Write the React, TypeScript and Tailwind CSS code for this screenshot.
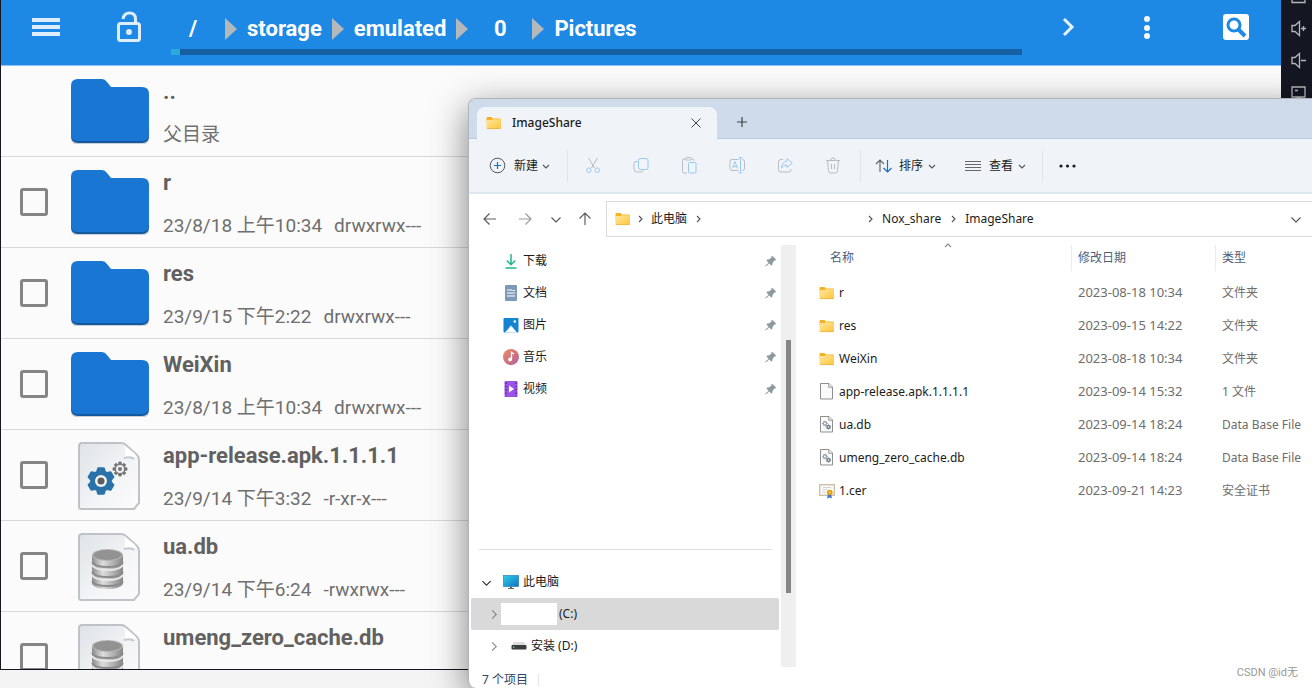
import type { ReactNode } from 'react';

type AndroidKind = 'folder' | 'apk' | 'db';

interface AndroidFile {
  name: string;
  date?: string;
  mode?: string;
  kind: AndroidKind;
  selectable: boolean;
}

const ANDROID_FILES: AndroidFile[] = [
  { name: '..', mode: '父目录', kind: 'folder', selectable: false },
  { name: 'r', date: '23/8/18 上午10:34', mode: 'drwxrwx---', kind: 'folder', selectable: true },
  { name: 'res', date: '23/9/15 下午2:22', mode: 'drwxrwx---', kind: 'folder', selectable: true },
  { name: 'WeiXin', date: '23/8/18 上午10:34', mode: 'drwxrwx---', kind: 'folder', selectable: true },
  { name: 'app-release.apk.1.1.1.1', date: '23/9/14 下午3:32', mode: '-r-xr-x---', kind: 'apk', selectable: true },
  { name: 'ua.db', date: '23/9/14 下午6:24', mode: '-rwxrwx---', kind: 'db', selectable: true },
  { name: 'umeng_zero_cache.db', kind: 'db', selectable: true },
];

const CRUMBS = ['/', 'storage', 'emulated', '0', 'Pictures'];

type WinKind = 'folder' | 'file' | 'db' | 'cert';

const WIN_FILES: { name: string; date: string; type: string; kind: WinKind }[] = [
  { name: 'r', date: '2023-08-18 10:34', type: '文件夹', kind: 'folder' },
  { name: 'res', date: '2023-09-15 14:22', type: '文件夹', kind: 'folder' },
  { name: 'WeiXin', date: '2023-08-18 10:34', type: '文件夹', kind: 'folder' },
  { name: 'app-release.apk.1.1.1.1', date: '2023-09-14 15:32', type: '1 文件', kind: 'file' },
  { name: 'ua.db', date: '2023-09-14 18:24', type: 'Data Base File', kind: 'db' },
  { name: 'umeng_zero_cache.db', date: '2023-09-14 18:24', type: 'Data Base File', kind: 'db' },
  { name: '1.cer', date: '2023-09-21 14:23', type: '安全证书', kind: 'cert' },
];

function gearPath(cx: number, cy: number, outer: number, inner: number, teeth: number) {
  const points: string[] = [];
  for (let i = 0; i < teeth; i++) {
    const base = (i / teeth) * Math.PI * 2 - Math.PI / 2;
    const step = Math.PI / teeth;
    const spots: [number, number][] = [
      [inner, -0.75],
      [outer, -0.42],
      [outer, 0.42],
      [inner, 0.75],
    ];
    spots.forEach(([r, k]) => {
      const a = base + step * k;
      points.push(`${(cx + r * Math.cos(a)).toFixed(2)} ${(cy + r * Math.sin(a)).toFixed(2)}`);
    });
  }
  return `M${points.join('L')}Z`;
}

/* ---------- Android icons ---------- */

function BigFolder() {
  return (
    <svg width="80" height="68" viewBox="-1 0 80 68" aria-hidden="true">
      <path d="M1 10v50q0 6 6 6h66q6 0 6-6V16z" fill="#9aa3ad" opacity=".5" />
      <path d="M1 9v49q0 7 7 7h64q7 0 7-7V18z" fill="#14589f" />
      <path d="M8 1h24q3 0 5 3l4 5h31q7 0 7 7v40q0 7-7 7H8q-7 0-7-7V8q0-7 7-7z" fill="#1976d2" />
    </svg>
  );
}

function BigPage({ children }: { children: ReactNode }) {
  return (
    <svg width="62" height="68" viewBox="0 0 62 68" aria-hidden="true">
      <defs>
        <linearGradient id="page" x1="0" y1="0" x2="1" y2="1">
          <stop offset="0" stopColor="#dfe3e7" />
          <stop offset=".6" stopColor="#f4f5f7" />
          <stop offset="1" stopColor="#fbfbfc" />
        </linearGradient>
        <linearGradient id="drum" x1="0" y1="0" x2="1" y2="0">
          <stop offset="0" stopColor="#8c8c8c" />
          <stop offset=".35" stopColor="#dedede" />
          <stop offset="1" stopColor="#868686" />
        </linearGradient>
      </defs>
      <path d="M4 1h39q3 0 5 2l11 10q2 2 2 5v43l-5 6H3q-2 0-2-2V4q0-3 3-3z" fill="url(#page)" stroke="#bfc3c7" strokeWidth="2" />
      <path d="M46 3q2 5 1 13 6-2 12-1-1-2-3-4z" fill="#fff" />
      <path d="M46 16q7-2 10 1" fill="none" stroke="#c6c9cd" strokeWidth="2" />
      {children}
    </svg>
  );
}

function ApkPage() {
  return (
    <BigPage>
      <path d={gearPath(23, 39, 13, 10, 6)} fill="#2a72a8" stroke="#2a72a8" strokeWidth="2" strokeLinejoin="round" />
      <circle cx="23" cy="39" r="6" fill="#f1f3f5" />
      <circle cx="23" cy="39" r="3.500" fill="#5c5c5c" />
      <path d={gearPath(42, 27, 7, 5, 8)} fill="#777" stroke="#777" strokeWidth="1" strokeLinejoin="round" />
      <circle cx="42" cy="27" r="4" fill="#eceef0" />
      <circle cx="42" cy="27" r="2" fill="#777" />
    </BigPage>
  );
}

function DbPage() {
  return (
    <BigPage>
      <path d="M14 22v29q3 5 15.500 5T45 51V22z" fill="url(#drum)" />
      <path d="M14 29q3 5 15.500 5T45 29M14 39q3 5 15.500 5T45 39M14 48q3 5 15.500 5T45 48" fill="none" stroke="#8b8b8b" strokeWidth="2" />
      <path d="M14 32q3 5 15.500 5T45 32M14 42q3 5 15.500 5T45 42" fill="none" stroke="#e8e8e8" strokeWidth="2" />
      <ellipse cx="29.500" cy="22" rx="15.500" ry="6" fill="#b4b4b4" />
      <ellipse cx="29.500" cy="22" rx="14" ry="5" fill="#929292" />
    </BigPage>
  );
}

const BIG_ICONS: Record<AndroidKind, ReactNode> = {
  folder: <BigFolder />,
  apk: <ApkPage />,
  db: <DbPage />,
};

/* ---------- Windows icons ---------- */

function SmallFolder() {
  return (
    <svg width="16" height="16" viewBox="0 0 16 16" aria-hidden="true">
      <defs>
        <linearGradient id="fold" x1="0" y1="0" x2="1" y2="1">
          <stop offset="0" stopColor="#ffe7a1" />
          <stop offset="1" stopColor="#fcc63a" />
        </linearGradient>
      </defs>
      <path d="M.5 3q0-1 1-1h4l1.500 1.500H14q1 0 1 1V8H.5z" fill="#f4b223" />
      <path d="M.5 5h5l1.200-.8H15V13q0 .8-.8.8H1.300q-.8 0-.8-.8z" fill="url(#fold)" />
      <path d="M1 13.600h13.700" stroke="#e6a92b" strokeWidth=".7" />
    </svg>
  );
}

function SmallFile({ gears = false }: { gears?: boolean }) {
  return (
    <svg width="16" height="17" viewBox="0 0 16 17" aria-hidden="true">
      <path d="M1.500.5h8.500l3.500 3.500v12h-12z" fill="#fafafa" stroke="#8f8f8f" />
      <path d="M9.800.7v3.500h3.500" fill="#fff" stroke="#8f8f8f" />
      {gears && (
        <>
          <path d={gearPath(6, 7.500, 2.800, 2, 8)} fill="#8c9aa8" />
          <circle cx="6" cy="7.500" r="1.100" fill="#fff" />
          <path d={gearPath(9.500, 11, 2.600, 1.800, 8)} fill="#5e6a76" />
          <circle cx="9.500" cy="11" r=".9" fill="#dfe3e7" />
        </>
      )}
    </svg>
  );
}

function Certificate() {
  return (
    <svg width="16" height="16" viewBox="0 0 16 16" aria-hidden="true">
      <rect x=".7" y="1.700" width="14.600" height="10.600" fill="#fdfcf8" stroke="#cdbfa9" strokeWidth="1.400" />
      <path d="M4 4.500h8M3.500 6.500h5M3 9h4" stroke="#c3c7d0" strokeWidth=".8" />
      <path d="M9 11l-1 4.500 2-1 .8 1L11 11zM12 11l1 4.500-1.600-1-.8 1L11 11z" fill="#2f6fd6" />
      <circle cx="10.800" cy="9.500" r="2.800" fill="#d99c12" />
      <circle cx="10.800" cy="9.500" r="1.200" fill="#f3cb4d" />
    </svg>
  );
}

const SMALL_ICONS: Record<WinKind, ReactNode> = {
  folder: <SmallFolder />,
  file: <SmallFile />,
  db: <SmallFile gears />,
  cert: <Certificate />,
};

function Chevron({ dir, size = 8, color = '#555' }: { dir: 'up' | 'down' | 'right'; size?: number; color?: string }) {
  const d = { up: 'M1 6l3-3 3 3', down: 'M1 3l3 3 3-3', right: 'M3 1l3 3-3 3' }[dir];
  return (
    <svg width={size} height={size} viewBox="0 0 8 8" fill="none" stroke={color} strokeWidth={9 / size} aria-hidden="true" className="shrink-0">
      <path d={d} />
    </svg>
  );
}

function Arrow({ dir, color = '#5c5c5c' }: { dir: 'left' | 'right' | 'up'; color?: string }) {
  const d = {
    left: 'M14 8H2M7.500 2.500L2 8l5.500 5.500',
    right: 'M2 8h12M8.500 2.500L14 8l-5.500 5.500',
    up: 'M8 14V2M2.500 7.500L8 2l5.500 5.500',
  }[dir];
  return (
    <svg width="16" height="16" viewBox="0 0 16 16" fill="none" stroke={color} strokeWidth="1.200" aria-hidden="true">
      <path d={d} />
    </svg>
  );
}

function Pin() {
  return (
    <svg width="12" height="12" viewBox="0 0 12 12" fill="#8d99a1" aria-hidden="true">
      <path d="M7.200.8l4 4-1.200.8-.8.2L7.600 7.800l-.3 2.300-.9.5L4.200 8.400 1.200 11.300l-.7.1.1-.8 3-2.900L1.500 5.500l.6-.9 2.400-.3 1.900-1.800.1-.9z" />
    </svg>
  );
}

const gray = '#b9bdc1';
const blue = '#98c9ee';

const TOOLS: { label: string; icon: ReactNode }[] = [
  {
    label: '剪切',
    icon: (
      <>
        <path d="M3.500 1l6 10M12.500 1l-6 10" stroke={gray} />
        <circle cx="3.800" cy="13.200" r="2.300" stroke={blue} />
        <circle cx="12.200" cy="13.200" r="2.300" stroke={blue} />
      </>
    ),
  },
  {
    label: '复制',
    icon: (
      <>
        <path d="M4.500 4.500H3q-2 0-2 2V12q0 3 3 3h4q1.500 0 2-1.500" stroke={gray} />
        <rect x="5.500" y="1.500" width="9.500" height="11" rx="2" stroke={blue} />
      </>
    ),
  },
  {
    label: '粘贴',
    icon: (
      <>
        <path d="M5 2H3q-1.500 0-1.500 1.500v11Q1.500 16 3 16h3M11 2h.5Q13 2 13 3.500V4" stroke={gray} />
        <rect x="4.500" y=".5" width="6" height="2.500" rx="1" stroke={gray} />
        <rect x="7.500" y="5.500" width="7.500" height="10.500" rx="1" stroke={blue} />
      </>
    ),
  },
  {
    label: '重命名',
    icon: (
      <>
        <path d="M9.500 2.500H3q-2 0-2 2v7q0 2 2 2h6.500M13.500 2.500q2 0 2 2v7q0 2-2 2" stroke={gray} />
        <path d="M3.500 11.500L6 4.500l2.500 7M4.300 9.500h3.400M11.500 1v14.500M9.500.7h4M9.500 15.800h4" stroke={blue} />
      </>
    ),
  },
  {
    label: '共享',
    icon: (
      <>
        <path d="M6 2.500H4q-2.500 0-2.500 2.500v7.500Q1.500 15 4 15h7.500q2.500 0 2.500-2.500V12" stroke={gray} />
        <path d="M10 1.500L15.300 6 10 10.500V8Q6.500 8 4.500 11q.3-6 5.500-7z" stroke={blue} />
      </>
    ),
  },
  {
    label: '删除',
    icon: (
      <path d="M1 3.500h14M5.500 3.500q0-2.500 2.500-2.500t2.500 2.500M2.500 3.500L3.500 14q.2 2 2 2h5q1.800 0 2-2l1-10.500M6.500 7v5M9.500 7v5" stroke={gray} />
    ),
  },
];

const PLACES: { label: string; icon: ReactNode }[] = [
  {
    label: '下载',
    icon: <path d="M8 1v10.500M3.800 7.500L8 11.700l4.200-4.200M2.500 15h11" fill="none" stroke="#1fb58a" strokeWidth="1.500" />,
  },
  {
    label: '文档',
    icon: (
      <>
        <rect x="2" y="0" width="12" height="16" rx="1" fill="#7f9ab8" />
        <path d="M4 5h5M4 8h8M4 11h8M9.500 5.500h2.500" stroke="#fff" strokeWidth="1.200" />
      </>
    ),
  },
  {
    label: '图片',
    icon: (
      <>
        <rect x=".5" y="1" width="15" height="14.500" rx="1" fill="#1383d2" />
        <path d="M2 15.500l6-7 6 7z" fill="#fff" />
        <circle cx="11.800" cy="4.500" r="1.300" fill="#fff" />
      </>
    ),
  },
  {
    label: '音乐',
    icon: (
      <>
        <circle cx="8" cy="8" r="8" fill="url(#music)" />
        <path d="M8.500 10.500V3.500l2.500 1.500" fill="none" stroke="#fff" strokeWidth="1.300" />
        <circle cx="7" cy="10.500" r="1.900" fill="#fff" />
      </>
    ),
  },
  {
    label: '视频',
    icon: (
      <>
        <rect x="1.500" y="0" width="13" height="16" rx="1" fill="#9a55e6" />
        <path d="M3 1.500v14M13 1.500v14" stroke="#4e2390" strokeWidth="1.300" strokeDasharray="1.500 1.800" />
        <path d="M6 4.500v7L11 8z" fill="#fff" />
      </>
    ),
  },
];

/* ---------- Android file manager ---------- */

function AppBar() {
  return (
    <header className="flex h-[66px] shrink-0 border-b border-[#8cc3f2] bg-[#1e88e5] text-white">
      <button type="button" aria-label="菜单" className="ml-[31px] h-[54px] w-7">
        <svg width="28" height="20" viewBox="0 0 28 20" fill="#fff" opacity=".85" aria-hidden="true">
          <path d="M0 1h28v4H0zM0 8h28v4H0zM0 15h28v4H0z" />
        </svg>
      </button>
      <button type="button" aria-label="解锁" className="ml-14 h-[54px] w-[26px]">
        <svg width="26" height="32" viewBox="0 0 26 32" fill="none" stroke="#fff" strokeWidth="3" opacity=".85" aria-hidden="true">
          <rect x="2.500" y="12.500" width="21" height="17" rx="2" />
          <path d="M7 8q1-6 6.500-6 6 0 6 6v4" />
          <circle cx="13" cy="21" r="3" fill="#fff" stroke="none" />
        </svg>
      </button>
      <div className="ml-[19px] flex-1">
        <nav aria-label="路径" className="flex h-12 items-center pt-[10px]">
          {CRUMBS.map((crumb, i) => (
            <span key={crumb} className="flex items-center">
              {i > 0 && (
                <svg width="12" height="22" viewBox="0 0 12 22" aria-hidden="true">
                  <path d="M0 0l12 11L0 22z" fill="#b5b8bb" />
                </svg>
              )}
              <a href="#" className="min-w-16 px-[10px] text-center text-[22px] leading-7 font-bold">
                {crumb}
              </a>
            </span>
          ))}
        </nav>
        <div className="mt-px ml-[10px] h-[6px] bg-[#165fa3]">
          <div className="h-full w-[9px] bg-[#29a9dc]" />
        </div>
      </div>
      <button type="button" aria-label="前进" className="ml-[33px] h-[54px] w-[26px]">
        <svg width="26" height="26" viewBox="0 0 26 26" fill="none" stroke="#fff" strokeWidth="3" opacity=".9" aria-hidden="true">
          <path d="M9 5l8 8-8 8" />
        </svg>
      </button>
      <button type="button" aria-label="更多" className="ml-[53px] h-[54px] w-[26px]">
        <svg width="26" height="26" viewBox="0 0 26 26" fill="#fff" opacity=".95" aria-hidden="true">
          <circle cx="13" cy="5" r="3" />
          <circle cx="13" cy="14" r="3" />
          <circle cx="13" cy="22" r="3" />
        </svg>
      </button>
      <button type="button" aria-label="搜索" className="mr-8 ml-[63px] h-[54px] w-[26px]">
        <svg width="26" height="26" viewBox="0 0 26 26" aria-hidden="true">
          <rect width="26" height="26" rx="3" fill="#fff" />
          <circle cx="11" cy="11" r="6" fill="none" stroke="#1e88e5" strokeWidth="3" />
          <path d="M15 15l7 7" stroke="#1e88e5" strokeWidth="4" />
        </svg>
      </button>
    </header>
  );
}

function AndroidRow({ file }: { file: AndroidFile }) {
  return (
    <li className="flex h-[91px] shrink-0 border-b border-[#d9d9d9]">
      <div className="flex w-16 items-center pl-[19px]">
        {file.selectable && (
          <input
            type="checkbox"
            aria-label={file.name}
            className="size-7 appearance-none rounded-[3px] border-3 border-[#858585]"
          />
        )}
      </div>
      <div className="flex w-[88px] justify-center pt-[12px]">{BIG_ICONS[file.kind]}</div>
      <div className="pt-[12px] pl-[10px]">
        <div className="text-[22px] leading-7 font-bold text-[#616161]">{file.name}</div>
        {file.mode && (
          <div className="mt-[17px] flex gap-3 text-[19px] leading-6 text-[#6f6f6f]">
            {file.date && <span>{file.date}</span>}
            <span>{file.mode}</span>
          </div>
        )}
      </div>
    </li>
  );
}

function EmulatorRail() {
  return (
    <aside className="flex w-[31px] shrink-0 flex-col items-center overflow-hidden bg-[#141722] pl-1">
      <svg width="16" height="100" viewBox="0 0 16 100" fill="none" stroke="#b4b6bb" strokeWidth="1.300" aria-hidden="true">
        <path d="M1-6h13v8.500H1z" />
        <path d="M1 25.500h3l4.500-4v14l-4.500-4H1zM10 28.500h5M12.500 26v5" />
        <path d="M1 57.500h3l4.500-4v14l-4.500-4H1zM10 60.500h5" />
        <path d="M1 87h13v10H1zM4 90.500h3M5 98.500h5" />
      </svg>
    </aside>
  );
}

/* ---------- Explorer window ---------- */

function Divider() {
  return <span className="h-8 w-px shrink-0 bg-[#dfe4ea]" />;
}

function TitleBar() {
  return (
    <div className="flex h-10 shrink-0 items-end border-b border-[#bccbdd] bg-[#cddbeb]">
      <div className="-mb-px ml-2 flex h-8 w-60 items-center rounded-t-lg bg-[#f0f4f9] pr-[15px] pl-[9px]">
        <SmallFolder />
        <span className="ml-[10px] flex-1 text-xs font-medium text-[#1b1b1b]">ImageShare</span>
        <button type="button" aria-label="关闭标签页">
          <svg width="12" height="12" viewBox="0 0 12 12" stroke="#444" aria-hidden="true">
            <path d="M1.500 1.500l9 9M10.500 1.500l-9 9" />
          </svg>
        </button>
      </div>
      <button type="button" aria-label="新建标签页" className="flex h-8 w-[50px] items-center justify-center">
        <svg width="12" height="12" viewBox="0 0 12 12" stroke="#444" strokeWidth="1.200" aria-hidden="true">
          <path d="M6 1v10M1 6h10" />
        </svg>
      </button>
    </div>
  );
}

function CommandBar() {
  return (
    <div className="flex h-[55px] shrink-0 items-center border-b-2 border-[#dfe7f1] bg-[#f0f4f9] text-xs">
      <button type="button" className="flex w-[98px] items-center pl-5">
        <svg width="17" height="17" viewBox="0 0 17 17" fill="none" aria-hidden="true">
          <circle cx="8.500" cy="8.500" r="7.300" stroke="#555" />
          <path d="M8.500 5v7M5 8.500h7" stroke="#1173c7" strokeWidth="1.200" />
        </svg>
        <span className="mr-1 ml-2">新建</span>
        <Chevron dir="down" />
      </button>
      <Divider />
      <div className="mr-[3px] ml-px flex">
        {TOOLS.map((tool) => (
          <button key={tool.label} type="button" disabled aria-label={tool.label} className="flex w-12 justify-center">
            <svg width="16" height="17" viewBox="0 0 16 17" fill="none" aria-hidden="true">
              {tool.icon}
            </svg>
          </button>
        ))}
      </div>
      <Divider />
      <button type="button" className="ml-[14px] flex items-center">
        <svg width="18" height="16" viewBox="0 0 18 16" fill="none" strokeWidth="1.200" aria-hidden="true">
          <path d="M5 14V2M1 6l4-4 4 4" stroke="#666" />
          <path d="M12.500 2v12M8.500 10l4 4 4-4" stroke="#1173c7" />
        </svg>
        <span className="mr-[5px] ml-[6px]">排序</span>
        <Chevron dir="down" />
      </button>
      <button type="button" className="mr-4 ml-7 flex items-center">
        <svg width="18" height="16" viewBox="0 0 18 16" stroke="#666" aria-hidden="true">
          <path d="M1 3.500h16M1 6.500h16M1 9.500h16M1 12.500h16" />
        </svg>
        <span className="mr-[5px] ml-[7px]">查看</span>
        <Chevron dir="down" />
      </button>
      <Divider />
      <button type="button" aria-label="查看更多" className="ml-4">
        <svg width="17" height="6" viewBox="0 0 17 6" fill="#1b1b1b" aria-hidden="true">
          <circle cx="2" cy="3" r="1.600" />
          <circle cx="8.500" cy="3" r="1.600" />
          <circle cx="15" cy="3" r="1.600" />
        </svg>
      </button>
    </div>
  );
}

function AddressBar() {
  return (
    <div className="flex shrink-0 pt-[7px] pb-2">
      <button type="button" aria-label="后退" className="flex w-[42px] items-center justify-center">
        <Arrow dir="left" />
      </button>
      <button type="button" aria-label="前进" className="flex w-7 items-center justify-center">
        <Arrow dir="right" color="#9b9b9b" />
      </button>
      <button type="button" aria-label="最近浏览" className="flex w-[34px] items-center justify-center">
        <Chevron dir="down" size={12} />
      </button>
      <button type="button" aria-label="上移" className="flex w-6 items-center justify-center">
        <Arrow dir="up" />
      </button>
      <nav aria-label="地址" className="ml-[9px] flex h-9 flex-1 items-center border border-r-0 border-[#dcdcdc] pr-[10px] pl-2 text-xs">
        <SmallFolder />
        <span className="ml-[5px] flex items-center gap-[7px]">
          <Chevron dir="right" />
          <a href="#">此电脑</a>
          <Chevron dir="right" />
        </span>
        <span className="ml-[164px] flex items-center gap-2">
          <Chevron dir="right" />
          <a href="#">Nox_share</a>
          <Chevron dir="right" />
          <a href="#">ImageShare</a>
        </span>
        <button type="button" aria-label="历史记录" className="ml-auto">
          <Chevron dir="down" size={12} />
        </button>
      </nav>
    </div>
  );
}

function Sidebar() {
  return (
    <aside className="flex w-[312px] shrink-0 flex-col pb-[5px] text-xs">
      <svg width="0" height="0" className="absolute" aria-hidden="true">
        <linearGradient id="music" x1="0" y1="0" x2="1" y2="1">
          <stop offset="0" stopColor="#f08a5c" />
          <stop offset="1" stopColor="#b060a0" />
        </linearGradient>
      </svg>
      {PLACES.map((place) => (
        <a key={place.label} href="#" className="flex h-8 items-center pr-1 pl-[34px]">
          <svg width="16" height="16" viewBox="0 0 16 16" aria-hidden="true">
            {place.icon}
          </svg>
          <span className="ml-1 flex-1">{place.label}</span>
          <Pin />
        </a>
      ))}
      <div className="mt-auto mr-[9px] mb-4 ml-[10px] h-px bg-[#dedede]" />
      <a href="#" className="flex h-8 items-center pl-3">
        <Chevron dir="down" size={11} color="#333" />
        <svg width="16" height="14" viewBox="0 0 16 14" className="mr-1 ml-[11px]" aria-hidden="true">
          <defs>
            <linearGradient id="screen" x1="0" y1="0" x2="1" y2="1">
              <stop offset="0" stopColor="#2fd0e6" />
              <stop offset="1" stopColor="#1470c4" />
            </linearGradient>
          </defs>
          <rect x=".5" y=".5" width="15" height="11" fill="url(#screen)" stroke="#2584b8" strokeWidth=".7" />
          <path d="M7 11.500h2v1.500h2v1H5v-1h2z" fill="#5d6b78" />
        </svg>
        此电脑
      </a>
      <a href="#" className="mx-[2px] flex h-8 items-center rounded-[2px] bg-[#d9d9d9] pl-[17px]">
        <Chevron dir="right" size={11} color="#8a8a8a" />
        <span className="mx-[2px] h-[22px] w-14 bg-white" />
        (C:)
      </a>
      <a href="#" className="mx-[2px] flex h-8 items-center pl-[17px]">
        <Chevron dir="right" size={11} color="#8a8a8a" />
        <svg width="16" height="10" viewBox="0 0 16 10" className="mr-1 ml-3" aria-hidden="true">
          <path d="M3 1h10l2 3H1z" fill="#dcdcdc" />
          <rect x=".5" y="4" width="15" height="4.500" rx="1" fill="#3d3d3d" />
          <rect x="2" y="5.500" width="1.500" height="1.500" fill="#45d35c" />
        </svg>
        安装 (D:)
      </a>
    </aside>
  );
}

function FileTable() {
  return (
    <table className="w-full table-fixed border-collapse text-left">
      <thead className="text-xs text-[#4c607a]">
        <tr className="h-[31px] align-top">
          <th className="w-[276px] p-0 font-normal">
            <div className="relative flex h-[26px] items-center border-r border-[#ececec] pl-[34px]">
              名称
              <span className="absolute -top-1 left-[148px]">
                <Chevron dir="up" color="#888" />
              </span>
            </div>
          </th>
          <th className="w-36 p-0 font-normal">
            <div className="flex h-[26px] items-center border-r border-[#ececec] pl-[6px]">修改日期</div>
          </th>
          <th className="p-0 font-normal">
            <div className="flex h-[26px] items-center pl-[6px]">类型</div>
          </th>
        </tr>
      </thead>
      <tbody>
        {WIN_FILES.map((file) => (
          <tr key={file.name} className="h-[33px] text-xs whitespace-nowrap text-[#6d6d6d]">
            <td className="p-0">
              <div className="flex items-center gap-1 pl-[23px] text-[#1b1b1b]">
                {SMALL_ICONS[file.kind]}
                {file.name}
              </div>
            </td>
            <td className="p-0 pl-[6px] text-[13px]">{file.date}</td>
            <td className="p-0 pl-[6px]">{file.type}</td>
          </tr>
        ))}
      </tbody>
    </table>
  );
}

function ExplorerWindow() {
  return (
    <section className="absolute top-[98px] right-0 bottom-0 left-[468px] flex flex-col overflow-hidden rounded-l-lg border border-r-0 border-b-0 border-[#b0b3b7] bg-white font-['Noto_Sans','Noto_Sans_CJK_SC',sans-serif] text-[#1b1b1b] shadow-[0_10px_36px_rgba(0,0,0,0.5)]">
      <TitleBar />
      <CommandBar />
      <AddressBar />
      <div className="flex min-h-0 flex-1">
        <Sidebar />
        <div className="w-[15px] shrink-0 bg-[#efefef]">
          <div className="mt-[95px] ml-[5px] h-[60%] w-[5px] bg-[#858585]" />
        </div>
        <main className="min-w-0 flex-1">
          <FileTable />
        </main>
      </div>
      <footer className="flex h-[21px] shrink-0 items-center pt-1 pl-[13px] text-xs text-[#2f4463]">
        <span>7 个项目</span>
        <span className="ml-[10px] h-3 w-px bg-[#e4e4e4]" />
      </footer>
    </section>
  );
}

export default function App() {
  return (
    <div className="relative flex h-screen flex-col overflow-hidden bg-[#f4f4f4] font-['Roboto','Noto_Sans_CJK_SC',sans-serif]">
      <div className="flex min-h-0 flex-1">
        <div className="flex min-w-0 flex-1 flex-col border-b border-l border-[#141722] bg-[#fbfbfb]">
          <AppBar />
          <ul className="min-h-0 flex-1 overflow-hidden">
            {ANDROID_FILES.map((file) => (
              <AndroidRow key={file.name} file={file} />
            ))}
          </ul>
        </div>
        <EmulatorRail />
      </div>
      <div className="h-[18px] shrink-0" />
      <ExplorerWindow />
      <span className="absolute right-[14px] bottom-[7px] text-[11px] leading-4 text-[#999]">CSDN @id无</span>
    </div>
  );
}
